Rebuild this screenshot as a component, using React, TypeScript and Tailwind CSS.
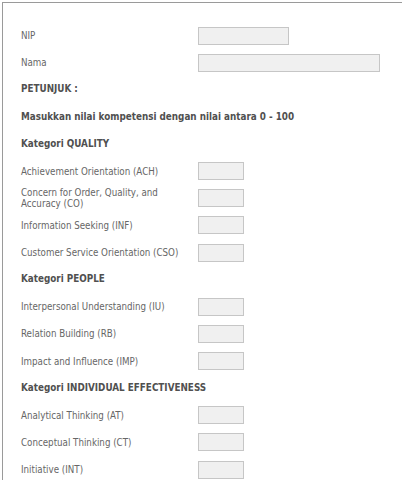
import React from "react";

type Row =
  | { kind: "field"; label: React.ReactNode; wide?: "nip" | "nama" }
  | { kind: "heading"; text: string };

const rows: Row[] = [
  { kind: "field", label: "NIP", wide: "nip" },
  { kind: "field", label: "Nama", wide: "nama" },
  { kind: "heading", text: "PETUNJUK :" },
  { kind: "heading", text: "Masukkan nilai kompetensi dengan nilai antara 0 - 100" },
  { kind: "heading", text: "Kategori QUALITY" },
  { kind: "field", label: "Achievement Orientation (ACH)" },
  {
    kind: "field",
    label: (
      <>
        Concern for Order, Quality, and
        <br />
        Accuracy (CO)
      </>
    ),
  },
  { kind: "field", label: "Information Seeking (INF)" },
  { kind: "field", label: "Customer Service Orientation (CSO)" },
  { kind: "heading", text: "Kategori PEOPLE" },
  { kind: "field", label: "Interpersonal Understanding (IU)" },
  { kind: "field", label: "Relation Building (RB)" },
  { kind: "field", label: "Impact and Influence (IMP)" },
  { kind: "heading", text: "Kategori INDIVIDUAL EFFECTIVENESS" },
  { kind: "field", label: "Analytical Thinking (AT)" },
  { kind: "field", label: "Conceptual Thinking (CT)" },
  { kind: "field", label: "Initiative (INT)" },
];

function Field({ wide }: { wide?: "nip" | "nama" }) {
  const w = wide === "nip" ? "w-[91px]" : wide === "nama" ? "w-[182px]" : "w-[46px]";
  return (
    <input
      type="text"
      className={`${w} h-[18px] border border-[#c6c6c6] bg-[#f0f0f0] outline-none`}
    />
  );
}

export default function App() {
  return (
    <div
      className="h-[480px] w-[402px] overflow-hidden bg-white"
      style={{ fontFamily: '"DejaVu Sans Condensed", "DejaVu Sans", sans-serif' }}
    >
      <div className="ml-[2px] mt-[2px] h-[478px] border-l border-t border-[#9a9a9a] pt-[19px]">
        <div className="flex flex-col">
          {rows.map((r, i) =>
            r.kind === "heading" ? (
              <div
                key={i}
                className="flex h-[27.125px] items-center whitespace-nowrap pl-[18px] text-[9.8px] font-bold text-[#505050]"
              >
                {r.text}
              </div>
            ) : (
              <div key={i} className="flex h-[27.125px] items-center">
                <div className="w-[195px] pl-[18px] text-[9.7px] leading-[11px] text-[#666666]">
                  {r.label}
                </div>
                <Field wide={r.wide} />
              </div>
            )
          )}
        </div>
      </div>
    </div>
  );
}
